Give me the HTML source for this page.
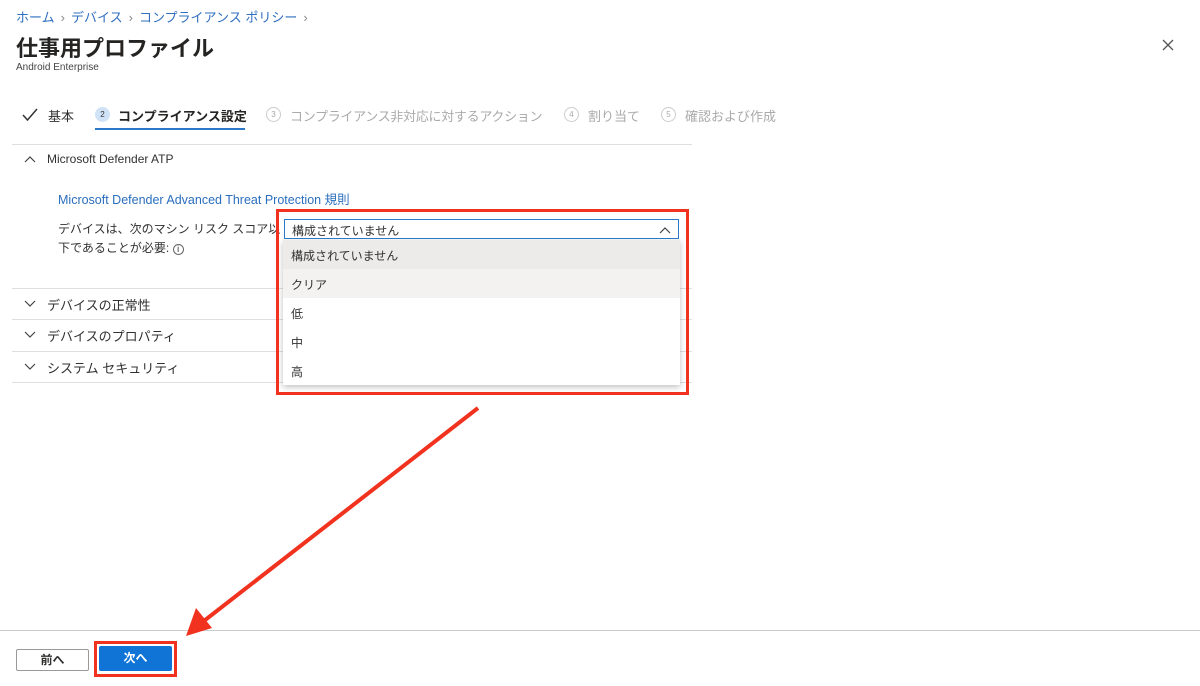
<!DOCTYPE html>
<html><head><meta charset="utf-8"><style>
*{margin:0;padding:0;box-sizing:border-box}
body{width:1200px;height:686px;background:#fff;font-family:"Liberation Sans","Noto Sans CJK JP",sans-serif;color:#323130;position:relative;overflow:hidden;font-size:13px}
.a{position:absolute;white-space:nowrap}
.bc{color:#2f6fbf;font-size:13px}
.sep{color:#888;margin:0 6px}
.hr{position:absolute;height:1px;background:#e1dfdd}
.dd{position:absolute;left:283px;width:397px;height:29px;font-size:12px;padding:7px 8px}
</style></head><body>
<div class="a bc" style="left:16px;top:7px">ホーム<span class="sep">›</span>デバイス<span class="sep">›</span>コンプライアンス ポリシー<span class="sep">›</span></div>
<div class="a" style="left:16px;top:31px;font-size:22px;font-weight:bold;color:#252423">仕事用プロファイル</div>
<div class="a" style="left:16px;top:62px;font-size:10px;color:#444">Android Enterprise</div>
<svg class="a" style="left:1162px;top:39px" width="12" height="12"><path d="M1 1L11 11M11 1L1 11" stroke="#555" stroke-width="1.3"/></svg>

<svg class="a" style="left:22px;top:108px" width="16" height="13"><path d="M1 7L5.5 12L15 1" stroke="#333" stroke-width="1.5" fill="none"/></svg>
<div class="a" style="left:48px;top:106px;font-size:13px">基本</div>
<div class="a" style="left:95px;top:107px;width:15px;height:15px;border-radius:50%;background:#cfe2f6;font-size:8px;text-align:center;line-height:15px;color:#333">2</div>
<div class="a" style="left:118px;top:106px;font-size:13px;font-weight:bold;color:#252423">コンプライアンス設定</div>
<div class="a" style="left:95px;top:128px;width:150px;height:2px;background:#2c78c8"></div>
<div class="a" style="left:266px;top:107px;width:15px;height:15px;border-radius:50%;border:1px solid #ccc;font-size:8px;text-align:center;line-height:13px;color:#aaa">3</div>
<div class="a" style="left:290px;top:106px;color:#aaa;letter-spacing:-0.3px">コンプライアンス非対応に対するアクション</div>
<div class="a" style="left:564px;top:107px;width:15px;height:15px;border-radius:50%;border:1px solid #ccc;font-size:8px;text-align:center;line-height:13px;color:#aaa">4</div>
<div class="a" style="left:588px;top:106px;color:#aaa">割り当て</div>
<div class="a" style="left:661px;top:107px;width:15px;height:15px;border-radius:50%;border:1px solid #ccc;font-size:8px;text-align:center;line-height:13px;color:#aaa">5</div>
<div class="a" style="left:685px;top:106px;color:#aaa">確認および作成</div>

<div class="hr" style="left:12px;top:144px;width:680px"></div>
<svg class="a" style="left:24px;top:155px" width="12" height="8"><path d="M1 7L6 2L11 7" stroke="#444" stroke-width="1.2" fill="none"/></svg>
<div class="a" style="left:47px;top:152px;font-size:12px">Microsoft Defender ATP</div>
<div class="a" style="left:58px;top:189px;color:#2a6ebd;font-size:12.5px">Microsoft Defender Advanced Threat Protection 規則</div>
<div class="a" style="left:58px;top:220px;font-size:12px;line-height:19px">デバイスは、次のマシン リスク スコア以<br>下であることが必要: <span style="font-size:9px;border:1px solid #666;border-radius:50%;display:inline-block;width:11px;height:11px;line-height:9px;text-align:center">i</span></div>
<div class="hr" style="left:12px;top:288px;width:680px"></div>
<div class="hr" style="left:12px;top:319px;width:680px"></div>
<div class="hr" style="left:12px;top:351px;width:680px"></div>
<div class="hr" style="left:12px;top:382px;width:680px"></div>
<svg class="a" style="left:24px;top:300px" width="12" height="80"><path d="M1 1L6 6L11 1M1 32L6 37L11 32M1 64L6 69L11 64" stroke="#444" stroke-width="1.2" fill="none"/></svg>
<div class="a" style="left:47px;top:295px;font-size:13px">デバイスの正常性</div>
<div class="a" style="left:47px;top:326px;font-size:13px">デバイスのプロパティ</div>
<div class="a" style="left:47px;top:358px;font-size:13px">システム セキュリティ</div>

<div class="a" style="left:283px;top:240px;width:397px;height:145px;background:#fff;box-shadow:0 2px 6px rgba(0,0,0,.25)"></div>
<div class="a" style="left:284px;top:219px;width:395px;height:20px;border:1px solid #2c78c8;background:#fff;font-size:12px;padding:2px 7px">構成されていません</div>
<svg class="a" style="left:659px;top:226px" width="12" height="8"><path d="M1 7L6 2L11 7" stroke="#444" stroke-width="1.2" fill="none"/></svg>
<div class="dd" style="top:240px;background:#edebe9">構成されていません</div>
<div class="dd" style="top:269px;background:#f3f2f1">クリア</div>
<div class="dd" style="top:298px">低</div>
<div class="dd" style="top:327px">中</div>
<div class="dd" style="top:356px">高</div>
<div class="a" style="left:276px;top:209px;width:413px;height:186px;border:3px solid #f0321e"></div>

<div class="hr" style="left:0;top:630px;width:1200px;background:#ccc"></div>
<div class="a" style="left:16px;top:649px;width:73px;height:22px;border:1px solid #999;border-radius:2px;text-align:center;line-height:20px;font-size:12px;font-weight:bold">前へ</div>
<div class="a" style="left:94px;top:641px;width:83px;height:36px;border:3px solid #f0321e"></div>
<div class="a" style="left:99px;top:646px;width:73px;height:25px;background:#0f74d6;border-radius:2px;color:#fff;text-align:center;line-height:25px;font-size:12px;font-weight:bold">次へ</div>

<svg class="a" style="left:0;top:0" width="1200" height="686">
<line x1="478" y1="408" x2="200" y2="624" stroke="#f0321e" stroke-width="4"/>
<polygon points="186,636 196,608 212,628" fill="#f0321e"/>
</svg>
</body></html>
